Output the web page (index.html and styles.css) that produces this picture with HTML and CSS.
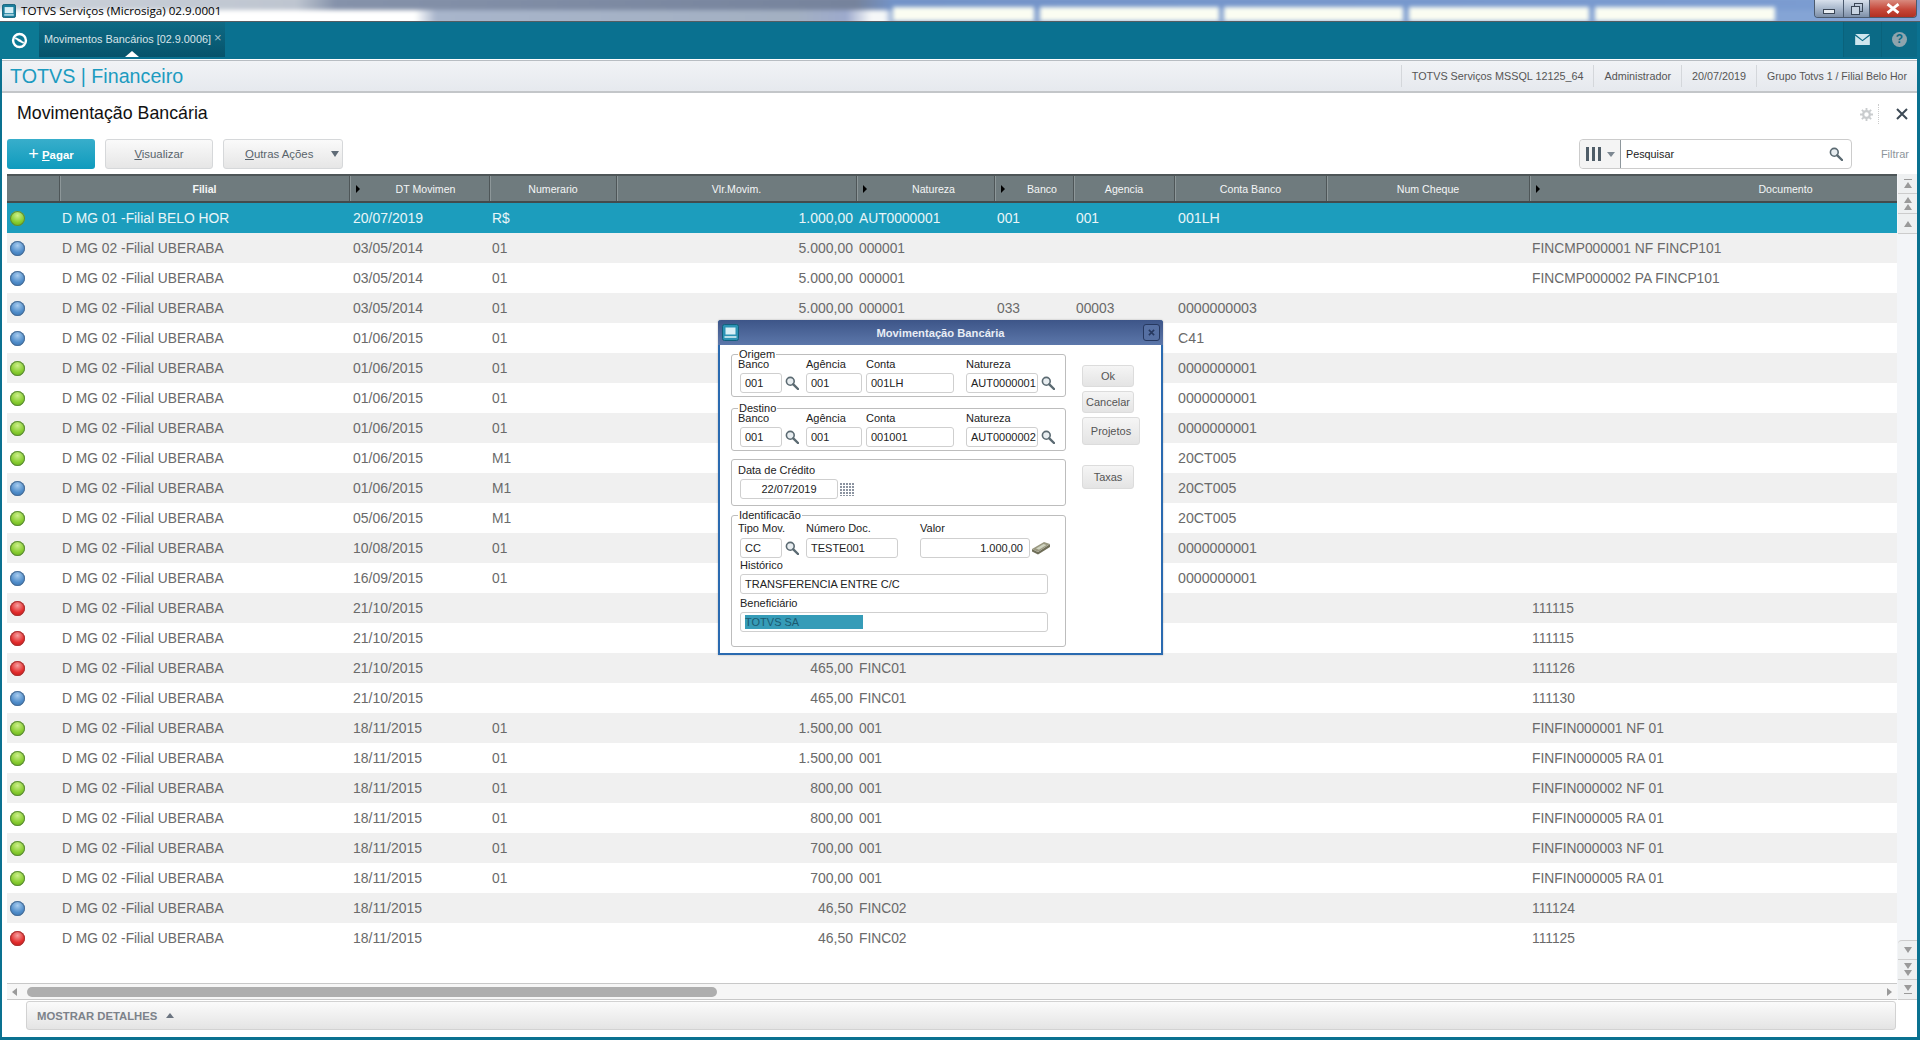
FILE: index.html
```html
<!DOCTYPE html>
<html lang="pt-BR">
<head>
<meta charset="utf-8">
<title>TOTVS Serviços (Microsiga) 02.9.0001</title>
<link rel="stylesheet" href="styles.css">
</head>
<body>
<svg class="defs" width="0" height="0" aria-hidden="true">
  <symbol id="lens" viewBox="0 0 14 14">
    <circle cx="5.3" cy="5.3" r="3.9" fill="#e8edf0" stroke="#5b6a72" stroke-width="1.6"/>
    <path d="M8.3 8.3 L13 13" stroke="#5b6a72" stroke-width="2.4" stroke-linecap="round"/>
  </symbol>
</svg>

<header class="titlebar">
  <svg class="app-icon" viewBox="0 0 16 16"><rect x="0.5" y="0.5" width="15" height="15" rx="2" fill="#1c7f9e" stroke="#0c5a72"/><rect x="3" y="3.5" width="10" height="7" fill="#d5eef5"/><path d="M2.5 12.5h11" stroke="#d5eef5" stroke-width="1.5"/></svg>
  <span class="app-title">TOTVS Serviços (Microsiga) 02.9.0001</span>
  <div class="win-buttons">
    <div class="win-btn win-min"><span class="min-glyph"></span></div>
    <div class="win-btn win-max"><svg viewBox="0 0 12 12" width="12" height="12"><rect x="3.5" y="0.5" width="8" height="8" fill="none" stroke="#3a4656"/><rect x="0.5" y="3.5" width="8" height="8" fill="#c8d4e2" stroke="#3a4656"/></svg></div>
    <div class="win-btn win-close"><svg viewBox="0 0 14 10" width="16" height="11"><path d="M2 1 L12 9 M12 1 L2 9" stroke="#fff" stroke-width="2.6"/></svg></div>
  </div>
</header>

<nav class="tabbar">
  <div class="logo-cell">
    <svg viewBox="0 0 18 18" width="17" height="17"><circle cx="9" cy="9" r="6.8" fill="none" stroke="#fff" stroke-width="2.6"/><path d="M4.5 6.5 L11 9.5 M7 8.5 L13.5 11.5" stroke="#fff" stroke-width="1.8"/></svg>
  </div>
  <div class="tab">
    <span class="tab-label">Movimentos Bancários [02.9.0006]</span>
    <span class="tab-close">×</span>
    <span class="tab-arrow"></span>
  </div>
  <div class="tabbar-fill"></div>
  <div class="tool-cell">
    <svg viewBox="0 0 16 12" width="15" height="11"><path d="M0 0h16L8 6.5z" fill="#cfe6ee"/><path d="M0 2l8 6 8-6v10H0z" fill="#cfe6ee"/></svg>
  </div>
  <div class="tool-cell tool-help"><span class="help-glyph">?</span></div>
</nav>

<main class="main">
  <div class="crumb">
    <div class="brand">TOTVS | Financeiro</div>
    <div class="env">
      <span class="env-item">TOTVS Serviços MSSQL 12125_64</span>
      <span class="env-item">Administrador</span>
      <span class="env-item">20/07/2019</span>
      <span class="env-item env-last">Grupo Totvs 1 / Filial Belo Hor</span>
    </div>
  </div>

  <div class="heading">
    <h1 class="page-title">Movimentação Bancária</h1>
    <svg class="gear" viewBox="0 0 14 14" width="13" height="13"><circle cx="7" cy="7" r="3.6" fill="none" stroke="#c9ccce" stroke-width="2.4"/><path d="M7 0v3M7 11v3M0 7h3M11 7h3M2 2l2 2M10 10l2 2M12 2l-2 2M4 10l-2 2" stroke="#c9ccce" stroke-width="2"/></svg>
    <span class="dots"></span>
    <svg class="close-x" viewBox="0 0 12 12" width="12" height="12"><path d="M1 1 L11 11 M11 1 L1 11" stroke="#3d4a55" stroke-width="2"/></svg>
  </div>

  <div class="toolbar">
    <button class="btn btn-primary"><span class="plus">+</span> <u>P</u>agar</button>
    <button class="btn btn-view"><u>V</u>isualizar</button>
    <button class="btn btn-more"><span><u>O</u>utras Ações</span><i class="caret"></i></button>
    <div class="spacer"></div>
    <div class="search">
      <div class="search-cols"><span class="bars"><i></i><i></i><i></i></span><i class="caret caret-sm"></i></div>
      <div class="search-text">Pesquisar</div>
      <svg class="search-lens" width="14" height="14"><use href="#lens"/></svg>
    </div>
    <div class="filter">Filtrar</div>
  </div>

  <div class="grid-area">
    <div class="grid-left">
      <div class="table">
        <div class="row thead">
          <div class="th"></div>
          <div class="th th-bold">Filial</div>
          <div class="th th-sort th-date">DT Movimen</div>
          <div class="th">Numerario</div>
          <div class="th">Vlr.Movim.</div>
          <div class="th th-sort">Natureza</div>
          <div class="th th-sort">Banco</div>
          <div class="th">Agencia</div>
          <div class="th">Conta Banco</div>
          <div class="th">Num Cheque</div>
          <div class="th th-sort th-doc">Documento</div>
        </div>
        <div class="row sel"><div><i class="dot green"></i></div><div>D MG 01 -Filial BELO HOR</div><div>20/07/2019</div><div>R$</div><div class="num">1.000,00</div><div>AUT0000001</div><div>001</div><div>001</div><div>001LH</div><div></div><div></div></div>
        <div class="row"><div><i class="dot blue"></i></div><div>D MG 02 -Filial UBERABA</div><div>03/05/2014</div><div>01</div><div class="num">5.000,00</div><div>000001</div><div></div><div></div><div></div><div></div><div>FINCMP000001 NF FINCP101</div></div>
        <div class="row"><div><i class="dot blue"></i></div><div>D MG 02 -Filial UBERABA</div><div>03/05/2014</div><div>01</div><div class="num">5.000,00</div><div>000001</div><div></div><div></div><div></div><div></div><div>FINCMP000002 PA FINCP101</div></div>
        <div class="row"><div><i class="dot blue"></i></div><div>D MG 02 -Filial UBERABA</div><div>03/05/2014</div><div>01</div><div class="num">5.000,00</div><div>000001</div><div>033</div><div>00003</div><div>0000000003</div><div></div><div></div></div>
        <div class="row"><div><i class="dot blue"></i></div><div>D MG 02 -Filial UBERABA</div><div>01/06/2015</div><div>01</div><div class="num"></div><div></div><div></div><div></div><div>C41</div><div></div><div></div></div>
        <div class="row"><div><i class="dot green"></i></div><div>D MG 02 -Filial UBERABA</div><div>01/06/2015</div><div>01</div><div class="num"></div><div></div><div></div><div></div><div>0000000001</div><div></div><div></div></div>
        <div class="row"><div><i class="dot green"></i></div><div>D MG 02 -Filial UBERABA</div><div>01/06/2015</div><div>01</div><div class="num"></div><div></div><div></div><div></div><div>0000000001</div><div></div><div></div></div>
        <div class="row"><div><i class="dot green"></i></div><div>D MG 02 -Filial UBERABA</div><div>01/06/2015</div><div>01</div><div class="num"></div><div></div><div></div><div></div><div>0000000001</div><div></div><div></div></div>
        <div class="row"><div><i class="dot green"></i></div><div>D MG 02 -Filial UBERABA</div><div>01/06/2015</div><div>M1</div><div class="num"></div><div></div><div></div><div></div><div>20CT005</div><div></div><div></div></div>
        <div class="row"><div><i class="dot blue"></i></div><div>D MG 02 -Filial UBERABA</div><div>01/06/2015</div><div>M1</div><div class="num"></div><div></div><div></div><div></div><div>20CT005</div><div></div><div></div></div>
        <div class="row"><div><i class="dot green"></i></div><div>D MG 02 -Filial UBERABA</div><div>05/06/2015</div><div>M1</div><div class="num"></div><div></div><div></div><div></div><div>20CT005</div><div></div><div></div></div>
        <div class="row"><div><i class="dot green"></i></div><div>D MG 02 -Filial UBERABA</div><div>10/08/2015</div><div>01</div><div class="num"></div><div></div><div></div><div></div><div>0000000001</div><div></div><div></div></div>
        <div class="row"><div><i class="dot blue"></i></div><div>D MG 02 -Filial UBERABA</div><div>16/09/2015</div><div>01</div><div class="num"></div><div></div><div></div><div></div><div>0000000001</div><div></div><div></div></div>
        <div class="row"><div><i class="dot red"></i></div><div>D MG 02 -Filial UBERABA</div><div>21/10/2015</div><div></div><div class="num"></div><div></div><div></div><div></div><div></div><div></div><div>111115</div></div>
        <div class="row"><div><i class="dot red"></i></div><div>D MG 02 -Filial UBERABA</div><div>21/10/2015</div><div></div><div class="num"></div><div></div><div></div><div></div><div></div><div></div><div>111115</div></div>
        <div class="row"><div><i class="dot red"></i></div><div>D MG 02 -Filial UBERABA</div><div>21/10/2015</div><div></div><div class="num">465,00</div><div>FINC01</div><div></div><div></div><div></div><div></div><div>111126</div></div>
        <div class="row"><div><i class="dot blue"></i></div><div>D MG 02 -Filial UBERABA</div><div>21/10/2015</div><div></div><div class="num">465,00</div><div>FINC01</div><div></div><div></div><div></div><div></div><div>111130</div></div>
        <div class="row"><div><i class="dot green"></i></div><div>D MG 02 -Filial UBERABA</div><div>18/11/2015</div><div>01</div><div class="num">1.500,00</div><div>001</div><div></div><div></div><div></div><div></div><div>FINFIN000001 NF 01</div></div>
        <div class="row"><div><i class="dot green"></i></div><div>D MG 02 -Filial UBERABA</div><div>18/11/2015</div><div>01</div><div class="num">1.500,00</div><div>001</div><div></div><div></div><div></div><div></div><div>FINFIN000005 RA 01</div></div>
        <div class="row"><div><i class="dot green"></i></div><div>D MG 02 -Filial UBERABA</div><div>18/11/2015</div><div>01</div><div class="num">800,00</div><div>001</div><div></div><div></div><div></div><div></div><div>FINFIN000002 NF 01</div></div>
        <div class="row"><div><i class="dot green"></i></div><div>D MG 02 -Filial UBERABA</div><div>18/11/2015</div><div>01</div><div class="num">800,00</div><div>001</div><div></div><div></div><div></div><div></div><div>FINFIN000005 RA 01</div></div>
        <div class="row"><div><i class="dot green"></i></div><div>D MG 02 -Filial UBERABA</div><div>18/11/2015</div><div>01</div><div class="num">700,00</div><div>001</div><div></div><div></div><div></div><div></div><div>FINFIN000003 NF 01</div></div>
        <div class="row"><div><i class="dot green"></i></div><div>D MG 02 -Filial UBERABA</div><div>18/11/2015</div><div>01</div><div class="num">700,00</div><div>001</div><div></div><div></div><div></div><div></div><div>FINFIN000005 RA 01</div></div>
        <div class="row"><div><i class="dot blue"></i></div><div>D MG 02 -Filial UBERABA</div><div>18/11/2015</div><div></div><div class="num">46,50</div><div>FINC02</div><div></div><div></div><div></div><div></div><div>111124</div></div>
        <div class="row"><div><i class="dot red"></i></div><div>D MG 02 -Filial UBERABA</div><div>18/11/2015</div><div></div><div class="num">46,50</div><div>FINC02</div><div></div><div></div><div></div><div></div><div>111125</div></div>
      </div>
      <div class="hscroll">
        <i class="arr arr-left"></i>
        <div class="hthumb"></div>
        <i class="arr arr-right"></i>
      </div>
    </div>
    <div class="vscroll">
      <div class="vbtn"><i class="bar"></i><i class="up"></i></div>
      <div class="vbtn"><i class="up"></i><i class="up up2"></i></div>
      <div class="vbtn"><i class="up"></i></div>
      <div class="vgap"></div>
      <div class="vbtn vbtn-first"><i class="down"></i></div>
      <div class="vbtn"><i class="down"></i><i class="down up2"></i></div>
      <div class="vbtn"><i class="down"></i><i class="bar bar-b"></i></div>
    </div>
  </div>

  <div class="details">MOSTRAR DETALHES <i class="details-arrow"></i></div>
</main>

<section class="dialog">
  <div class="dlg-title">
    <svg class="dlg-icon" viewBox="0 0 17 17"><rect x="0.5" y="0.5" width="16" height="16" rx="2" fill="#2b93b4" stroke="#12607c"/><rect x="3.5" y="3.5" width="10" height="7" fill="#d9f0f6"/><path d="M2.5 13h12" stroke="#d9f0f6" stroke-width="1.6"/></svg>
    <span class="dlg-caption">Movimentação Bancária</span>
    <span class="dlg-close"><svg viewBox="0 0 8 8" width="7" height="7"><path d="M1 1l6 6M7 1L1 7" stroke="#26385f" stroke-width="1.8"/></svg></span>
  </div>
  <div class="dlg-body">
    <div class="dlg-form">
      <fieldset class="group g-origem">
        <legend>Origem</legend>
        <div class="fields">
          <div class="f f-banco"><label>Banco</label><div class="with-icon"><div class="inp w42">001</div><svg class="lens" width="14" height="14"><use href="#lens"/></svg></div></div>
          <div class="f f-ag"><label>Agência</label><div class="inp w56">001</div></div>
          <div class="f f-conta"><label>Conta</label><div class="inp w88">001LH</div></div>
          <div class="f f-nat"><label>Natureza</label><div class="with-icon"><div class="inp w72">AUT0000001</div><svg class="lens" width="14" height="14"><use href="#lens"/></svg></div></div>
        </div>
      </fieldset>
      <fieldset class="group g-destino">
        <legend>Destino</legend>
        <div class="fields">
          <div class="f f-banco"><label>Banco</label><div class="with-icon"><div class="inp w42">001</div><svg class="lens" width="14" height="14"><use href="#lens"/></svg></div></div>
          <div class="f f-ag"><label>Agência</label><div class="inp w56">001</div></div>
          <div class="f f-conta"><label>Conta</label><div class="inp w88">001001</div></div>
          <div class="f f-nat"><label>Natureza</label><div class="with-icon"><div class="inp w72">AUT0000002</div><svg class="lens" width="14" height="14"><use href="#lens"/></svg></div></div>
        </div>
      </fieldset>
      <div class="group g-data">
        <label>Data de Crédito</label>
        <div class="with-icon"><div class="inp w98 center">22/07/2019</div><span class="calendar"></span></div>
      </div>
      <fieldset class="group g-ident">
        <legend>Identificacão</legend>
        <div class="fields">
          <div class="f f-banco f-tall"><label>Tipo Mov.</label><div class="with-icon"><div class="inp w42">CC</div><svg class="lens" width="14" height="14"><use href="#lens"/></svg></div></div>
          <div class="f f-doc f-tall"><label>Número Doc.</label><div class="inp w92">TESTE001</div></div>
          <div class="f f-tall f-nat"><label>Valor</label><div class="with-icon"><div class="inp w110 right">1.000,00</div>
            <svg class="calc" viewBox="0 0 20 14" width="20" height="14"><path d="M1 8 L7 11 L19 3 L19 6 L7 13.5 L1 10.5z" fill="#6f6e58"/><path d="M1 8 L13 1 L19 3 L7 11z" fill="#9a9880"/><path d="M5 7.5 L12.5 3 L15.5 4 L8 8.8z" fill="#cfd3bf"/></svg>
          </div></div>
        </div>
        <div class="wide"><label>Histórico</label><div class="inp w308">TRANSFERENCIA ENTRE C/C</div></div>
        <div class="wide wide-2"><label>Beneficiário</label><div class="inp w308"><span class="selected">TOTVS SA</span></div></div>
      </fieldset>
    </div>
    <div class="dlg-actions">
      <button class="dbtn">Ok</button>
      <button class="dbtn">Cancelar</button>
      <button class="dbtn dbtn-proj">Projetos</button>
      <button class="dbtn dbtn-tax">Taxas</button>
    </div>
  </div>
</section>
</body>
</html>
```
FILE: styles.css
```css
* { box-sizing: border-box; }
html, body { margin: 0; height: 1040px; width: 1920px; overflow: hidden; }
body { position: relative; background: #0a7190; font-family: "Liberation Sans", Arial, sans-serif; color: #666; }
.defs { position: absolute; }

/* window title */
.titlebar { height: 22px; display: flex; align-items: center; position: relative; overflow: hidden; isolation: isolate; border-bottom: 1px solid #555d63; background: #fff; }
.titlebar::before {
  content: ""; position: absolute; left: -4px; right: -4px; top: -4px; bottom: -4px; z-index: -1; filter: blur(2px);
  background:
    linear-gradient(#fbfdf2, #fbfdf2) 897px 11px / 141px 14px no-repeat,
    linear-gradient(#fbfdf2, #fbfdf2) 1044px 11px / 179px 14px no-repeat,
    linear-gradient(#fbfdf2, #fbfdf2) 1228px 11px / 179px 14px no-repeat,
    linear-gradient(#fbfdf2, #fbfdf2) 1413px 11px / 180px 14px no-repeat,
    linear-gradient(#fbfdf2, #fbfdf2) 1599px 11px / 180px 14px no-repeat,
    linear-gradient(90deg, #fff 0, #fff 419px, #a8b5cb 440px, #a3b0c2 800px, #9ca9cc 850px, #f5f7f8 875px, #f5f7f8 889px, #88a3cf 897px, #84a4d6 100%) 0 14px / 100% 16px no-repeat,
    linear-gradient(90deg, #ccd2da 0, #bec5d0 300px, #8592aa 340px, #76839c 860px, #7393c8 897px, #7c9dd2 100%) 0 0 / 100% 14px no-repeat,
    #fff;
}
.app-icon { width: 14px; height: 14px; margin: 0 0 0 2px; flex: none; }
.app-title { margin-left: 5px; font: 11.65px/1 "Open Sans", sans-serif; color: #000; }
.win-buttons { position: absolute; right: 3px; top: 0; width: 103px; height: 18px; display: flex; border: 1px solid #4b5a6e; border-top: 0; border-radius: 0 0 4px 4px; overflow: hidden; }
.win-btn { display: flex; align-items: center; justify-content: center; border-right: 1px solid #4b5a6e; background: linear-gradient(#d7e0ec, #a9b8cc 50%, #7f90a8); }
.win-min { width: 29px; }
.win-max { width: 26px; }
.win-close { flex: 1; border-right: 0; background: linear-gradient(#d98a7e, #c6483a 55%, #b13022); }
.min-glyph { width: 12px; height: 5px; background: #e8edf3; border: 1px solid #3a4656; margin-top: 6px; }

/* tab bar */
.tabbar { height: 37px; display: flex; background: #0a7190; }
.logo-cell { width: 39px; display: flex; align-items: center; justify-content: center; background: #0c7994; }
.tab { width: 186px; height: 35px; position: relative; display: flex; align-items: center; padding-left: 5px; background: linear-gradient(#0d6a85, #07536b); }
.tab-label { font-size: 10.85px; color: #d8e4e9; white-space: nowrap; margin-top: -2px; }
.tab-close { font-size: 13px; color: #9fc2cf; margin-left: 3px; margin-top: -4px; }
.tab-arrow { position: absolute; left: 86px; bottom: 0; width: 0; height: 0; border: 7px solid transparent; border-top: 0; border-bottom: 6px solid #fff; }
.tabbar-fill { flex: 1; }
.tool-cell { width: 38px; height: 35px; display: flex; align-items: center; justify-content: center; background: #0b6a86; border-left: 1px solid #0a627b; }
.tool-help { width: 36px; margin-right: 3px; }
.help-glyph { width: 15px; height: 15px; border-radius: 50%; background: #8fa4ad; color: #0a6a85; font: bold 12px/15px "Liberation Sans", sans-serif; text-align: center; }

/* main */
.main { margin: 0 3px 0 2px; height: 978px; background: #fff; display: flex; flex-direction: column; }
.crumb { margin-top: 1px; height: 33px; display: flex; align-items: center; justify-content: space-between; padding: 0 2px 0 8px; background: linear-gradient(#f1f3f6, #e6e9ee); border-top: 1px solid #b8bdc2; border-bottom: 2px solid #c3c6c9; }
.brand { font-size: 19.7px; color: #1c9bc0; }
.env { display: flex; height: 22px; align-items: center; }
.env-item { font-size: 10.8px; color: #555; line-height: 22px; padding: 0 10px; border-left: 1px solid #d4d7db; }
.env-last { padding: 0 8px 0 10px; font-size: 10.55px; }
.heading { height: 46px; display: flex; align-items: center; padding: 0 8px 0 15px; }
.page-title { margin: 0; flex: 1; font-size: 17.8px; font-weight: normal; color: #111; padding-bottom: 5px; }
.gear { margin: 0 5px 4px 0; }
.dots { height: 20px; border-left: 1px dotted #ccc; margin: 0 17px 4px 0; }
.close-x { margin: 0 1px 4px 0; }

/* toolbar */
.toolbar { height: 30px; display: flex; align-items: stretch; padding-left: 5px; }
.btn { height: 30px; border: 1px solid #d6d8da; border-radius: 3px; font: 11.4px "Liberation Sans", sans-serif; color: #58636b; background: linear-gradient(#fafafa, #e6e6e6); padding: 0; }
.btn-primary { width: 88px; margin-right: 10px; border: 0; color: #fff; font-weight: bold; background: linear-gradient(#38aecb, #0f9bbd); }
.plus { font-size: 18px; line-height: 12px; vertical-align: -1px; font-weight: normal; }
.btn-view { width: 108px; margin-right: 10px; }
.btn-more { width: 120px; display: flex; align-items: center; justify-content: space-between; padding: 0 3px 0 21px; }
.caret { display: block; width: 0; height: 0; border: 4px solid transparent; border-top: 6px solid #5f6b76; border-bottom: 0; }
.caret-sm { border-width: 4px; border-top-width: 5px; border-bottom: 0; border-top-color: #7d8892; }
.spacer { flex: 1; }
.search { width: 273px; display: flex; align-items: center; border: 1px solid #ccc; border-radius: 4px; }
.search-cols { width: 41px; height: 100%; display: flex; align-items: center; justify-content: space-between; padding: 0 5px 0 6px; background: #f4f4f4; border: 1px solid #8e979c; border-width: 0 1px 0 0; border-radius: 4px 0 0 4px; }
.bars { display: flex; gap: 3px; }
.bars i { width: 3px; height: 14px; background: #4f5d68; }
.search-text { flex: 1; padding-left: 5px; font-size: 10.8px; color: #222; }
.search-lens { margin-right: 8px; }
.filter { width: 65px; padding: 0 8px 0 0; font-size: 11px; line-height: 30px; text-align: right; color: #8d959b; }

/* grid */
.grid-area { display: flex; margin-top: 5px; height: 826px; }
.grid-left { width: 1895px; padding-left: 5px; display: flex; flex-direction: column; }
.table { height: 809px; }
.row {
  display: grid; height: 30px; align-items: center; font-size: 13.8px; color: #6a6a6a;
  grid-template-columns: 52px 290px 140px 127px 240px 138px 79px 101px 152px 203px 368px;
}
.row > div { padding-left: 3px; white-space: nowrap; overflow: hidden; }
.row > div:nth-child(3) { font-size: 14px; padding-left: 4px; }
.row > div:nth-child(9) { font-size: 14.2px; padding-left: 4px; }
.row:nth-child(even) { background: #fff; }
.row:nth-child(odd) { background: #f0f0f0; }
.row.sel { background: #1c9dbd; color: #e9f5f8; }
.row > .num { text-align: right; padding: 0 3px 0 0; font-size: 14px; }
.dot { display: block; width: 15px; height: 15px; border-radius: 50%; }
.row > div:first-child { padding-left: 3px; overflow: visible; }
.green { background: radial-gradient(circle at 50% 30%, #cdf08a 0, #86cb2e 55%, #5da018 100%); box-shadow: inset 0 0 0 1px #5c8a3a; }
.blue { background: radial-gradient(circle at 50% 30%, #a9cdf0 0, #4f8cc9 55%, #2f6aa8 100%); box-shadow: inset 0 0 0 1px #4a6e96; }
.red { background: radial-gradient(circle at 50% 30%, #f7a0a0 0, #e22c2c 55%, #b61414 100%); box-shadow: inset 0 0 0 1px #a33; }
.thead { height: 29px; background: #6f7b7e !important; border-top: 2px solid #4e5658; border-bottom: 2px solid #434b4d; color: #fff; }
.row.thead > .th { height: 100%; padding: 0; font-size: 10.6px; display: flex; align-items: center; justify-content: center; border-left: 1px solid #4e5658; box-shadow: inset 1px 0 0 #8d9799; position: relative; color: #f4f6f6; }
.row.thead > .th:first-child { border-left: 0; box-shadow: none; }
.th-bold { font-weight: bold; }
.row.thead > .th-sort { padding-left: 16px; }
.row.thead > .th-date { padding-left: 12px; }
.row.thead > .th-doc { padding-left: 144px; }
.th-sort::before { content: ""; position: absolute; left: 6px; top: 9px; width: 0; height: 0; border: 4px solid transparent; border-left: 4px solid #000; border-right: 0; }

.hscroll { height: 17px; display: flex; align-items: center; border-top: 1px solid #c8c8c8; border-bottom: 1px solid #c8c8c8; background: #f6f6f6; }
.hthumb { width: 690px; height: 10px; margin-left: 10px; border-radius: 5px; background: #aeaeae; }
.arr { display: block; width: 0; height: 0; border: 4px solid transparent; }
.arr-left { border-right: 5px solid #9a9a9a; border-left: 0; margin-left: 5px; }
.arr-right { border-left: 5px solid #9a9a9a; border-right: 0; margin-left: auto; margin-right: 5px; }
.vscroll { width: 20px; padding-left: 1px; display: flex; flex-direction: column; background: #f3f5f8; height: 826px; }
.vbtn { width: 19px; height: 20px; display: flex; flex-direction: column; align-items: center; justify-content: center; background: #eef0f1; border-bottom: 1px solid #ccc; }
.vbtn-first { border-top: 1px solid #ccc; border-radius: 4px 0 0 0; }
.vgap { flex: 1; }
.up { display: block; width: 0; height: 0; border: 4px solid transparent; border-top: 0; border-bottom: 6px solid #9a9a9a; }
.down { display: block; width: 0; height: 0; border: 4px solid transparent; border-bottom: 0; border-top: 6px solid #9a9a9a; }
.up2 { margin-top: 1px; }
.bar { display: block; width: 8px; height: 1px; background: #9a9a9a; margin-bottom: 2px; }
.bar-b { margin: 2px 0 0; }

.details { margin: 1px 0 0 24px; width: 1870px; height: 29px; padding-left: 10px; display: flex; align-items: center; gap: 9px; border: 1px solid #d2d2d2; border-radius: 3px; background: linear-gradient(#fbfbfb, #e4e4e4); font-size: 11.3px; font-weight: bold; color: #7c828a; }
.details-arrow { width: 0; height: 0; border: 4px solid transparent; border-top: 0; border-bottom: 5px solid #6b7480; }

/* dialog */
.dialog { position: absolute; left: 718px; top: 320px; width: 445px; height: 335px; background: #fff; border: 2px solid #2a6ab0; border-top: 0; border-radius: 3px 3px 0 0; font-size: 11px; color: #222; box-shadow: 0 0 2px rgba(0,0,0,.3); }
.dlg-title { margin: 0 -2px; height: 25px; position: relative; display: flex; align-items: center; justify-content: center; border-radius: 3px 3px 0 0; background: linear-gradient(#3d5588, #5c77aa); }
.dlg-icon { position: absolute; left: 4px; top: 4px; width: 17px; height: 17px; }
.dlg-caption { font-size: 11.2px; font-weight: bold; color: #e8edf5; }
.dlg-close { position: absolute; right: 3px; top: 4px; width: 17px; height: 17px; display: flex; align-items: center; justify-content: center; border: 1px solid #26385f; border-radius: 3px; background: #5670a3; }
.dlg-body { display: flex; }
.dlg-form { width: 346px; padding-left: 11px; }
.dlg-actions { width: 80px; padding-left: 16px; display: flex; flex-direction: column; align-items: flex-start; padding-top: 20px; }
.dbtn { width: 52px; height: 22px; margin-bottom: 4px; padding: 0; border: 1px solid #dcdcdc; border-radius: 3px; background: linear-gradient(#f5f5f5, #e4e4e4); font: 11px "Liberation Sans", sans-serif; color: #555; }
.dbtn-proj { width: 58px; height: 28px; }
.dbtn-tax { height: 24px; margin-top: 16px; }
.group { margin: 0; padding: 0 0 0 8px; width: 335px; border: 1px solid #bdbdbd; border-radius: 3px; display: block; min-width: 0; }
.group legend { padding: 0 1px; margin-left: -2px; font-size: 11px; line-height: 12px; height: 12px; color: #222; }
.g-origem { height: 49px; margin-top: 3px; }
.g-destino { height: 49px; margin-top: 5px; }
.g-data { height: 47px; margin-top: 8px; padding-top: 4px; }
.g-ident { height: 138px; margin-top: 3px; }
.fields { display: flex; margin-top: -2px; }
.f { display: flex; flex-direction: column; }
.f label, .g-data label { display: block; height: 15px; line-height: 12px; margin-left: -2px; }
.f-banco { width: 66px; }
.f-ag { width: 60px; }
.f-conta { width: 100px; }
.f-doc { width: 114px; }
.f-tall label { height: 19px; line-height: 18px; }
.f-ag label, .f-conta label, .f-doc label, .f-nat label { margin-left: 0; }
.with-icon { display: flex; align-items: center; gap: 3px; }
.inp { height: 20px; line-height: 18px; padding: 0 4px; border: 1px solid #cfcfcf; border-radius: 3px; font-size: 11px; color: #222; background: #fff; white-space: nowrap; overflow: hidden; }
.w42 { width: 42px; }
.w56 { width: 56px; }
.w72 { width: 72px; }
.w88 { width: 88px; }
.w92 { width: 92px; }
.w98 { width: 98px; }
.w110 { width: 110px; }
.w308 { width: 308px; }
.center { text-align: center; }
.right { text-align: right; padding-right: 6px; }
.lens { flex: none; }
.calc { margin-left: -2px; }
.calendar { width: 15px; height: 13px; margin-left: -1px; background: repeating-linear-gradient(transparent 0 2px, #fff 2px 3px), repeating-linear-gradient(90deg, #8b93a0 0 2px, #fff 2px 3px); }
.wide label { display: block; height: 16px; line-height: 15px; }
.wide-2 { margin-top: 2px; }
.selected { display: block; width: 118px; height: 14px; line-height: 14px; margin-top: 2px; background: #369cb8; color: #1c5a70; }
```
